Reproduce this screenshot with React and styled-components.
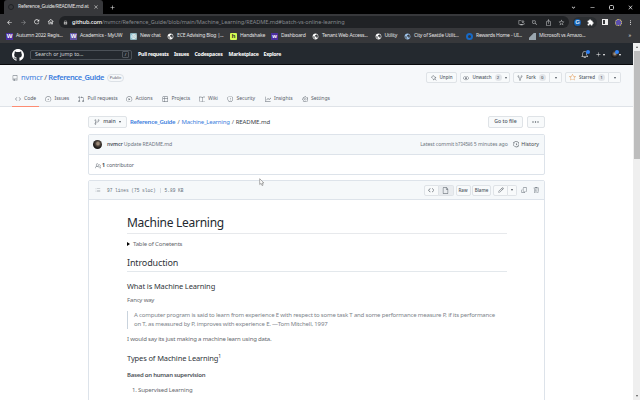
import React from "react";
import styled, { createGlobalStyle, css } from "styled-components";
import {
  GoCode, GoIssueOpened, GoGitPullRequest, GoPlay, GoTable, GoBook, GoShield, GoGraph, GoGear,
  GoRepo, GoPin, GoEye, GoRepoForked, GoStar, GoGitBranch, GoHistory, GoPeople, GoListUnordered,
  GoFile, GoPencil, GoCopy, GoTrash, GoBell, GoPlus,
} from "react-icons/go";
import {
  MdArrowBack, MdArrowForward, MdRefresh, MdOutlineHome, MdLock, MdInstallDesktop, MdZoomOut,
  MdIosShare, MdStarBorder, MdExtension, MdMoreVert, MdClose, MdAdd, MdExpandMore, MdRemove,
  MdPublic,
} from "react-icons/md";

const Global = createGlobalStyle`
  * { box-sizing: border-box; }
  body { margin: 0; background: #fff; overflow: hidden; }
`;

const Screen = styled.div`
  width: 640px;
  height: 400px;
  display: flex;
  flex-direction: column;
  overflow: hidden;
  position: relative;
  font-family: "Noto Sans", "Open Sans", sans-serif;
  font-size: 5.25px;
  line-height: 1;
  color: #57606a;
  white-space: nowrap;
  svg { display: block; flex: none; }
`;

const row = css`
  display: flex;
  align-items: center;
`;

/* Browser chrome */
const TabStrip = styled.div`
  ${row}
  height: 14px;
  flex: none;
  background: #000;
  padding-left: 4px;
  color: #e4e4e4;
`;
const Tab = styled.div`
  ${row}
  width: 99px;
  height: 14px;
  background: #37383b;
  border-radius: 3px 3px 0 0;
  padding-left: 4px;
`;
const Spinner = styled.span`
  width: 6px;
  height: 6px;
  border: 1px solid #202226;
  border-radius: 50%;
  margin-right: 4px;
`;
const TabTitle = styled.span`
  width: 75px;
  font-size: 5.1px;
  letter-spacing: -0.27px;
`;
const NewTab = styled.span`
  margin-left: 6px;
`;
const WindowButtons = styled.div`
  ${row}
  margin-left: auto;
  gap: 12.8px;
  padding-right: 6px;
`;
const Restore = styled.span`
  width: 5px;
  height: 5px;
  border: 1px solid #ccc;
  border-radius: 1.5px;
`;
const Toolbar = styled.div`
  ${row}
  height: 15px;
  flex: none;
  background: #37383b;
  padding: 1px 0 0 6px;
  color: #eee;
`;
const NavIcons = styled.div`
  ${row}
  width: 53px;
  gap: 6.5px;
`;
const Omnibox = styled.div`
  ${row}
  width: 510px;
  height: 12px;
  border-radius: 6px;
  background: #202225;
  padding: 1px 4px 0 4px;
`;
const Url = styled.span`
  margin-left: 4px;
  font-size: 5.6px;
  letter-spacing: -0.05px;
  color: #85898d;
  b { font-weight: 500; color: #fff; }
`;
const OmniTools = styled.div`
  ${row}
  margin-left: auto;
  gap: 6.5px;
  color: #b8babd;
`;
const Extensions = styled.div`
  ${row}
  width: 24px;
  height: 11px;
  margin-left: 4px;
  padding: 0 1px;
  gap: 5.5px;
  border-radius: 6px;
  background: #2b2e31;
`;
const GIcon = styled.span`
  width: 7px;
  height: 7px;
  border-radius: 50%;
  background: #1560b0;
  color: #d5eaff;
  font: bold 6px/7px "Liberation Sans", sans-serif;
  text-align: center;
`;
const SidePanel = styled.span`
  width: 6px;
  height: 6px;
  margin-left: 5px;
  border: 1px solid #eee;
  border-right-width: 3px;
`;
const Profile = styled.span`
  width: 7px;
  height: 7px;
  margin: 0 5px 0 7px;
  border-radius: 50%;
  background: #5b4fae;
  border: 1.5px dotted #e8dc55;
`;
const Bookmarks = styled.div`
  ${row}
  height: 14px;
  flex: none;
  background: #37383b;
  padding-left: 6px;
  color: #e3e3e3;
`;
const Bookmark = styled.div`
  ${row}
  width: ${(p) => p.$w}px;
  font-size: 5.1px;
  letter-spacing: -0.2px;
  svg, i { margin-right: 3px; }
`;
const Favicon = styled.i`
  width: 7px;
  height: 7px;
  flex: none;
  background: ${(p) => p.$bg};
  color: ${(p) => p.$fg || "#fff"};
  border-radius: ${(p) => p.$r || 0};
  font: bold 6px/7px "Liberation Sans", sans-serif;
  letter-spacing: 0;
  text-align: center;
`;
const Ring = styled.i`
  width: 7px;
  height: 7px;
  flex: none;
  border: 2px solid #1769c5;
  border-radius: 50%;
`;

/* Site */
const Page = styled.div`
  display: flex;
  flex: 1;
  min-height: 0;
`;
const Site = styled.div`
  flex: 1;
  min-width: 0;
  overflow: hidden;
`;
const Header = styled.header`
  ${row}
  height: 22px;
  background: #24292f;
  border-bottom: 1px solid #08090b;
  padding: 2px 0 0 12px;
  color: #fff;
`;
const Search = styled.div`
  ${row}
  justify-content: space-between;
  width: 102px;
  height: 10px;
  margin: 0 6px;
  padding: 0 2px 0 4px;
  border: 1px solid #4b5158;
  border-radius: 2px;
  font-size: 5.3px;
  color: #d0d3d6;
`;
const Slash = styled.span`
  width: 7px;
  height: 7px;
  border: 0.5px solid #50565d;
  border-radius: 1px;
  font-size: 4px;
  line-height: 6px;
  text-align: center;
`;
const HeaderLink = styled.b`
  width: ${(p) => p.$w}px;
  font-size: 5.2px;
  letter-spacing: -0.22px;
`;
const HeaderTools = styled.div`
  ${row}
  margin-left: auto;
  padding-right: 12px;
  gap: 6px;
`;
const Notify = styled.span`
  position: relative;
`;
const Dot = styled.span`
  position: absolute;
  top: -1px;
  right: -1px;
  width: 4px;
  height: 4px;
  border-radius: 50%;
  background: #2f81f7;
`;
const Caret = styled.span`
  display: block;
  flex: none;
  border: 1.5px solid transparent;
  border-top: 2px solid currentColor;
  border-bottom: 0;
  margin-left: ${(p) => p.$ml || 0}px;
`;
const Avatar = styled.span`
  display: block;
  flex: none;
  width: ${(p) => p.$s}px;
  height: ${(p) => p.$s}px;
  border-radius: 50%;
  background: radial-gradient(circle at 55% 40%, #9c8a78 0 15%, #4b413a 35%, #1d1a19 60%);
`;
const RepoHead = styled.div`
  height: 42px;
  background: #f6f8fa;
  border-bottom: 1px solid #dfe3e8;
  display: flex;
  flex-direction: column;
`;
const RepoTitle = styled.div`
  ${row}
  height: 23px;
  flex: none;
  padding: 2px 12px 0 12px;
`;
const RepoName = styled.div`
  width: 86px;
  margin-left: 3px;
  font-size: 7.5px;
  color: #3b7ddd;
  letter-spacing: -0.1px;
  span { color: #57606a; margin: 0 1.5px; }
  b { font-weight: 600; letter-spacing: -0.38px; }
`;
const Public = styled.span`
  width: 17px;
  height: 8px;
  border: 1px solid #dce1e6;
  border-radius: 4px;
  font-size: 4.2px;
  line-height: 6px;
  text-align: center;
  letter-spacing: -0.05px;
`;
const Actions = styled.div`
  ${row}
  margin-left: auto;
`;
const Button = styled.div`
  ${row}
  justify-content: center;
  width: ${(p) => p.$w}px;
  height: ${(p) => p.$h || 11}px;
  gap: 3px;
  margin-left: ${(p) => p.$ml || 0}px;
  background: ${(p) => p.$bg || "#f8fafb"};
  border: 1px solid #dfe3e7;
  border-left-width: ${(p) => (p.$joined ? 0 : 1)}px;
  border-radius: ${(p) => p.$r || "2px"};
  font-size: ${(p) => p.$fs || 4.5}px;
  font-weight: 500;
  color: #4b535c;
`;
const Count = styled.span`
  width: 7px;
  height: 7px;
  border-radius: 4px;
  background: #e2e5e9;
  font-size: 4.3px;
  line-height: 7px;
  text-align: center;
`;
const Nav = styled.nav`
  display: flex;
  height: 19px;
  flex: none;
  padding-left: 12px;
`;
const NavItem = styled.div`
  ${row}
  width: ${(p) => p.$w}px;
  padding: 4px 0 0 ${(p) => p.$pl || 0}px;
  margin-right: ${(p) => p.$mr || 0}px;
  border-bottom: 1px solid ${(p) => (p.$on ? "#fd8c73" : "transparent")};
  font-size: 5.1px;
  letter-spacing: -0.07px;
  color: #59616a;
  svg { margin-right: 3px; }
`;
const Content = styled.main`
  width: 457px;
  margin-left: 88px;
`;
const FileBar = styled.div`
  ${row}
  height: 13px;
  margin-top: 8px;
`;
const Crumbs = styled.div`
  margin-left: 3px;
  font-size: 6px;
  letter-spacing: -0.22px;
  color: #3b7ddd;
  span { color: #57606a; margin: 0 2px; }
  em { font-style: normal; color: #3a4149; letter-spacing: -0.06px; }
  b { font-weight: 600; letter-spacing: -0.25px; }
`;
const Box = styled.section`
  border: 1px solid #dde3ea;
  border-radius: ${(p) => (p.$open ? "2px 2px 0 0" : "2px")};
  margin-top: ${(p) => p.$mt}px;
  height: ${(p) => p.$h}px;
`;
const BoxHead = styled.div`
  ${row}
  height: ${(p) => p.$h}px;
  background: #f5f8fa;
  border-bottom: 1px solid #dde3ea;
  padding: 0 5px 0 ${(p) => p.$pl || 4}px;
`;
const CommitText = styled.span`
  margin-left: 5px;
  color: #6e7781;
  font-size: 5.2px;
  letter-spacing: -0.08px;
  b { font-weight: 600; color: #4a525a; }
`;
const CommitMeta = styled.span`
  margin: 0 5px 0 auto;
  color: #6e7781;
  font-size: 5.2px;
  letter-spacing: -0.06px;
  code { font: 4.6px "Liberation Mono", monospace; letter-spacing: -0.3px; }
`;
const History = styled.span`
  ${row}
  gap: 2px;
  font-size: 5.25px;
  color: #3f474f;
`;
const Contributors = styled.div`
  ${row}
  height: 20px;
  padding: 1px 0 0 6px;
  letter-spacing: -0.06px;
  b { color: #3f474f; margin: 0 1.5px 0 1px; }
`;
const FileStats = styled.div`
  ${row}
  margin-left: 6px;
  font: 4.5px "Liberation Mono", monospace;
  color: #66707a;
  span + span { border-left: 1px solid #d8dee4; padding-left: 4px; margin-left: 4px; }
`;
const FileTools = styled.div`
  ${row}
  margin-left: auto;
`;
const Loose = styled.span`
  margin-left: ${(p) => p.$ml}px;
`;

/* Rendered markdown */
const Markdown = styled.article`
  width: 380px;
  margin-left: 38px;
  padding-top: 14px;
  color: #66696e;
  font-size: 6px;
  letter-spacing: -0.175px;
`;
const H1 = styled.h1`
  margin: 0;
  height: 20px;
  border-bottom: 1px solid #e7e9ec;
  font-size: 12px;
  font-weight: 400;
  line-height: 17px;
  letter-spacing: -0.27px;
  color: #24292f;
`;
const Details = styled.div`
  ${row}
  height: 20px;
  gap: 3px;
  i { border: 2px solid transparent; border-left: 3px solid #000; border-right: 0; }
`;
const H2 = styled.h2`
  margin: 0;
  height: 18px;
  border-bottom: 1px solid #e3e8ec;
  font-size: 9px;
  font-weight: 400;
  line-height: 18px;
  letter-spacing: -0.14px;
  color: #30353b;
`;
const H3 = styled.h3`
  margin: 0;
  padding-top: ${(p) => p.$pt}px;
  font-size: 7.5px;
  font-weight: 400;
  line-height: 10px;
  letter-spacing: -0.13px;
  color: #30353b;
  sup { font-size: 5px; line-height: 0; vertical-align: 2.6px; }
`;
const P = styled.p`
  margin: 0;
  height: 9px;
  line-height: 9px;
  margin-top: ${(p) => p.$mt}px;
`;
const Item = styled(P)`
  padding-left: 5px;
`;
const Quote = styled.blockquote`
  margin: 6px 0 0;
  padding-left: 6px;
  border-left: 1px solid #c9d3dd;
  line-height: 9px;
  color: #7c838a;
`;
const H4 = styled.h4`
  margin: 8px 0 0;
  font-size: 6px;
  font-weight: 600;
  line-height: 9px;
  letter-spacing: -0.24px;
  color: #4c5157;
`;
const Scrollbar = styled.div`
  display: flex;
  flex-direction: column;
  align-items: center;
  justify-content: space-between;
  width: 7px;
  background: #efefef;
  padding: 3px 0;
  color: #555;
`;
const Thumb = styled.span`
  width: 6px;
  height: 108px;
  margin: 3px 0 auto;
  background: #bdbdbd;
`;
const Up = styled(Caret)`
  transform: rotate(180deg);
`;
const Pointer = styled.svg`
  position: absolute;
  left: 259px;
  top: 178px;
`;

const GithubMark = () => (
  <svg width="12" height="12" viewBox="0 0 16 16" fill="currentColor">
    <path d="M8 0C3.58 0 0 3.58 0 8c0 3.54 2.29 6.53 5.47 7.59.4.07.55-.17.55-.38 0-.19-.01-.82-.01-1.49-2.01.37-2.53-.49-2.69-.94-.09-.23-.48-.94-.82-1.13-.28-.15-.68-.52-.01-.53.63-.01 1.08.58 1.23.82.72 1.21 1.87.87 2.33.66.07-.52.28-.87.51-1.07-1.78-.2-3.64-.89-3.64-3.95 0-.87.31-1.59.82-2.15-.08-.2-.36-1.02.08-2.12 0 0 .67-.21 2.2.82.64-.18 1.32-.27 2-.27s1.36.09 2 .27c1.53-1.04 2.2-.82 2.2-.82.44 1.1.16 1.92.08 2.12.51.56.82 1.27.82 2.15 0 3.07-1.87 3.75-3.65 3.95.29.25.54.73.54 1.48 0 1.07-.01 1.93-.01 2.2 0 .21.15.46.55.38A8.01 8.01 0 0 0 16 8c0-4.42-3.58-8-8-8z" />
  </svg>
);

const Dots = () => (
  <svg width="7" height="2" viewBox="0 0 7 2" fill="currentColor">
    <circle cx="1" cy="1" r=".7" />
    <circle cx="3.5" cy="1" r=".7" />
    <circle cx="6" cy="1" r=".7" />
  </svg>
);

const MARKS = [
  [64, "Autumn 2022 Regis...", <Favicon $bg="#4b2e9e">W</Favicon>],
  [60, "Academics - MyUW", <Favicon $bg="#6253a5">W</Favicon>],
  [37, "New chat", <Favicon $bg="#8db3bd" $r="1px">◎</Favicon>],
  [63, "ECE Advising Blog |...", <MdPublic size={7} color="#fff" />],
  [41, "Handshake", <Favicon $bg="#d3fb52" $fg="#222" $r="1px">h</Favicon>],
  [41, "Dashboard", <Favicon $bg="#4b2e9e">w</Favicon>],
  [62.5, "Tenant Web Access...", <MdPublic size={7} color="#fff" />],
  [29.5, "Utility", <MdPublic size={7} color="#fff" />],
  [62, "City of Seattle Utilit...", <MdPublic size={7} color="#9fc4ec" />],
  [63, "Rewards Home - UI...", <Ring />],
  [99.5, "Microsoft vs Amazo...", <Favicon $bg="linear-gradient(135deg,#37383b 35%,#9aa6af 36%)" />],
];

const TABS = [
  [GoIssueOpened, "Issues", 33],
  [GoGitPullRequest, "Pull requests", 48],
  [GoPlay, "Actions", 36],
  [GoTable, "Projects", 36.5],
  [GoBook, "Wiki", 28.5],
  [GoShield, "Security", 37.5],
  [GoGraph, "Insights", 37],
  [GoGear, "Settings", 40],
];

export default function App() {
  return (
    <Screen>
      <Global />
      <TabStrip>
        <Tab>
          <Spinner />
          <TabTitle>Reference_Guide/README.md at</TabTitle>
          <MdClose size={6} />
        </Tab>
        <NewTab><MdAdd size={7} /></NewTab>
        <WindowButtons>
          <MdExpandMore size={7} />
          <MdRemove size={7} />
          <Restore />
          <MdClose size={7} />
        </WindowButtons>
      </TabStrip>
      <Toolbar>
        <NavIcons>
          <MdArrowBack size={7} />
          <MdArrowForward size={7} color="#8b8d90" />
          <MdRefresh size={7.5} />
          <MdOutlineHome size={7.5} />
        </NavIcons>
        <Omnibox>
          <MdLock size={5} color="#aaa" />
          <Url><b>github.com</b>/nvmcr/Reference_Guide/blob/main/Machine_Learning/README.md#batch-vs-online-learning</Url>
          <OmniTools>
            <MdInstallDesktop size={7} />
            <MdZoomOut size={7} />
            <MdIosShare size={7} />
            <MdStarBorder size={7} />
          </OmniTools>
        </Omnibox>
        <Extensions>
          <GIcon>G</GIcon>
          <MdExtension size={7} color="#fff" />
        </Extensions>
        <SidePanel />
        <Profile />
        <MdMoreVert size={7} />
      </Toolbar>
      <Bookmarks>
        {MARKS.map(([w, text, icon]) => (
          <Bookmark key={text} $w={w}>{icon}{text}</Bookmark>
        ))}
        »
      </Bookmarks>
      <Page>
        <Site>
          <Header>
            <GithubMark />
            <Search>Search or jump to...<Slash>/</Slash></Search>
            <HeaderLink $w={36}>Pull requests</HeaderLink>
            <HeaderLink $w={20.5}>Issues</HeaderLink>
            <HeaderLink $w={34}>Codespaces</HeaderLink>
            <HeaderLink $w={35}>Marketplace</HeaderLink>
            <HeaderLink $w={20}>Explore</HeaderLink>
            <HeaderTools>
              <Notify><GoBell size={7.5} /><Dot /></Notify>
              <Actions><GoPlus size={7} /><Caret $ml={1} /></Actions>
              <Actions><Notify><Avatar $s={7.5} /><Dot /></Notify><Caret $ml={1} /></Actions>
            </HeaderTools>
          </Header>
          <RepoHead>
            <RepoTitle>
              <GoRepo size={6} />
              <RepoName>nvmcr<span>/</span><b>Reference_Guide</b></RepoName>
              <Public>Public</Public>
              <Actions>
                <Button $w={31}><GoPin size={6} />Unpin</Button>
                <Button $w={50} $ml={3}><GoEye size={6} />Unwatch<Count>2</Count><Caret /></Button>
                <Button $w={37} $ml={3} $r="2px 0 0 2px"><GoRepoForked size={6} />Fork<Count>0</Count></Button>
                <Button $w={12} $joined $r="0 2px 2px 0"><Caret /></Button>
                <Button $w={44} $ml={3} $r="2px 0 0 2px"><GoStar size={7} color="#e39a55" />Starred<Count>1</Count></Button>
                <Button $w={12} $joined $r="0 2px 2px 0"><Caret /></Button>
              </Actions>
            </RepoTitle>
            <Nav>
              <NavItem $w={27} $pl={3} $mr={6} $on><GoCode size={6} />Code</NavItem>
              {TABS.map(([Icon, text, w]) => (
                <NavItem key={text} $w={w}><Icon size={6.5} />{text}</NavItem>
              ))}
            </Nav>
          </RepoHead>
          <Content>
            <FileBar>
              <Button $w={39} $h={12} $fs={5.2}><GoGitBranch size={6} />main<Caret /></Button>
              <Crumbs>
                <b>Reference_Guide</b><span>/</span>Machine_Learning<span>/</span><em>README.md</em>
              </Crumbs>
              <Actions>
                <Button $w={35} $h={12} $fs={5.2}>Go to file</Button>
                <Button $w={18.5} $h={12} $ml={3.5}><Dots /></Button>
              </Actions>
            </FileBar>
            <Box $mt={6} $h={41}>
              <BoxHead $h={20}>
                <Avatar $s={9} />
                <CommitText><b>nvmcr</b> Update README.md</CommitText>
                <CommitMeta>Latest commit <code>b734586</code> 5 minutes ago</CommitMeta>
                <History><GoHistory size={6.5} />History</History>
              </BoxHead>
              <Contributors><GoPeople size={6} /><b>1</b>contributor</Contributors>
            </Box>
            <Box $mt={5} $h={240} $open>
              <BoxHead $h={19} $pl={6}>
                <GoListUnordered size={6} />
                <FileStats><span>97 lines (75 sloc)</span><span>5.89 KB</span></FileStats>
                <FileTools>
                  <Button $w={15} $r="2px 0 0 2px"><GoCode size={6.5} /></Button>
                  <Button $w={15} $joined $bg="#e9ecef" $r="0 2px 2px 0"><GoFile size={7} /></Button>
                  <Button $w={15} $ml={2}>Raw</Button>
                  <Button $w={19} $ml={1.5}>Blame</Button>
                  <Button $w={15} $ml={2} $r="2px 0 0 2px"><GoPencil size={6} /></Button>
                  <Button $w={9} $joined $r="0 2px 2px 0"><Caret /></Button>
                  <Loose $ml={3.5}><GoCopy size={6.5} /></Loose>
                  <Loose $ml={5.5}><GoTrash size={6.5} /></Loose>
                </FileTools>
              </BoxHead>
              <Markdown>
                <H1>Machine Learning</H1>
                <Details><i />Table of Conetents</Details>
                <H2>Introduction</H2>
                <H3 $pt={9}>What is Machine Learning</H3>
                <P $mt={5}>Fancy way</P>
                <Quote>
                  <div>A computer program is said to learn from experience E with respect to some task T and some performance measure P, if its performance</div>
                  <div>on T, as measured by P, improves with experience E. —Tom Mitchell, 1997</div>
                </Quote>
                <P $mt={6}>I would say its just making a machine learn using data.</P>
                <H3 $pt={9}>Types of Machine Learning<sup>1</sup></H3>
                <H4>Based on human supervision</H4>
                <Item $mt={5.6}>1. Supervised Learning</Item>
              </Markdown>
            </Box>
          </Content>
        </Site>
        <Scrollbar><Up /><Thumb /><Caret /></Scrollbar>
      </Page>
      <Pointer width="6" height="9" viewBox="0 0 6 9">
        <path d="M.7.7v5.8l1.4-1.2 1 2.3 1-.5-1-2.1h1.8z" fill="#fff" stroke="#777" strokeWidth=".6" />
      </Pointer>
    </Screen>
  );
}
